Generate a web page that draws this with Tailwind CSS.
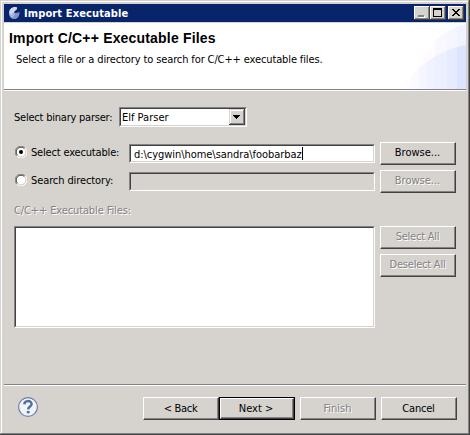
<!DOCTYPE html>
<html lang="en">
<head>
<meta charset="utf-8">
<title>Import Executable</title>
<script src="https://cdn.jsdelivr.net/npm/@tailwindcss/browser@4"></script>
</head>
<body class="h-[435px] w-[470px] overflow-hidden bg-[#d6d3ce]">
<main class="flex h-[435px] w-[470px] flex-col border-r border-b border-[#424142] font-['DejaVu_Sans_Condensed','Noto_Sans',sans-serif] text-[11px] leading-[13px] whitespace-nowrap text-black">
<div class="flex grow flex-col border-t border-r border-b border-l border-t-[#d6d3ce] border-r-[#848284] border-b-[#848284] border-l-[#d6d3ce]">
<div class="flex grow flex-col border-t border-l border-white pt-[2px] pr-[2px] pl-[2px]">

  <header class="flex h-[18px] shrink-0 items-center bg-[#08246b] pr-[2px] pl-[4px] text-white">
    <svg class="h-[14px] w-[12px]" viewBox="0 0 12 14"><path d="M8.500 1C4 .6 1 3 1 7c0 3.500 2.300 5.800 5.200 5.800 3 0 5-2.300 5.200-6.300L6.800 7.300 6 5.800 9 3z" fill="#a5b6d8"/><path d="M8.500 1C4 .6 1.500 3 1.500 6.500L3 9l3-3.200L9 3z" fill="#cdd8ee"/><path d="M6.800 7.300l4.600-.8c-.2 4-2.200 6.300-5.200 6.300-1.200 0-2.200-.4-3-1 2 0 3.600-1.500 3.600-4.500z" fill="#8296c2"/></svg>
    <h1 class="ml-[4px] grow text-[11px] font-bold tracking-[0.12px]">Import Executable</h1>
    <div class="flex">
      <svg class="h-[14px] w-[16px]" viewBox="0 0 16 14" shape-rendering="crispEdges"><path d="M0 0h16v14H0z" fill="#424142"/><path d="M0 0h15v13H0z" fill="#fff"/><path d="M1 1h14v12H1z" fill="#848284"/><path d="M1 1h13v11H1z" fill="#d6d3ce"/><path d="M5 10h6v2H5z" fill="#fff"/><path d="M4 9h6v2H4z" fill="#848284"/></svg>
      <svg class="h-[14px] w-[16px]" viewBox="0 0 16 14" shape-rendering="crispEdges"><path d="M0 0h16v14H0z" fill="#424142"/><path d="M0 0h15v13H0z" fill="#fff"/><path d="M1 1h14v12H1z" fill="#848284"/><path d="M1 1h13v11H1z" fill="#d6d3ce"/><path d="M3 2h9v9H3zM4 4v6h7V4z" fill="#000" fill-rule="evenodd"/></svg>
      <svg class="ml-[2px] h-[14px] w-[16px]" viewBox="0 0 16 14" shape-rendering="crispEdges"><path d="M0 0h16v14H0z" fill="#424142"/><path d="M0 0h15v13H0z" fill="#fff"/><path d="M1 1h14v12H1z" fill="#848284"/><path d="M1 1h13v11H1z" fill="#d6d3ce"/><path d="M4 3h2v1h1v1h2V4h1V3h2v1h-1v1h-1v1H9v1h1v1h1v1h1v1h-2V9H9V8H7v1H6v1H4V9h1V8h1V7h1V6H6V5H5V4H4z" fill="#000"/></svg>
    </div>
  </header>

  <section class="mt-px flex h-[68px] shrink-0 justify-between border-b border-white bg-white">
    <div class="flex h-[67px] w-full justify-between border-b border-[#848284]">
      <div class="pt-[8px] pl-[5px]">
        <h2 class="font-['Liberation_Sans'] text-[14px] leading-[15px] font-bold tracking-[0.18px]">Import C/C++ Executable Files</h2>
        <p class="mt-[7px] pl-[7px] tracking-[-0.12px]">Select a file or a directory to search for C/C++ executable files.</p>
      </div>
      <svg class="h-[66px] w-[66px] shrink-0" viewBox="0 0 66 66">
        <defs>
          <clipPath id="outer"><path d="M66 1C40 6 18 30 10 66h56z"/></clipPath>
          <clipPath id="inner"><path d="M66 22C40 26 14 44 3 66h63z"/></clipPath>
        </defs>
        <g clip-path="url(#outer)"><path d="M3 0h32v66H3z" fill="#fffbff"/><path d="M35 0h12v66H35z" fill="#f9f8ff"/><path d="M47 0h10v66H47z" fill="#f5f6ff"/><path d="M57 0h9v66h-9z" fill="#eff2ff"/></g>
        <g clip-path="url(#inner)"><path d="M3 0h9v66H3z" fill="#fffbff"/><path d="M12 0h7v66h-7z" fill="#faf9ff"/><path d="M19 0h8v66h-8z" fill="#f5f5ff"/><path d="M27 0h8v66h-8z" fill="#f1f2ff"/><path d="M35 0h12v66H35z" fill="#edf0ff"/><path d="M47 0h10v66H47z" fill="#e6ebff"/><path d="M57 0h9v66h-9z" fill="#dce5ff"/></g>
      </svg>
    </div>
  </section>

  <section class="flex h-[293px] shrink-0 flex-col pt-[16px] pl-[10px]">
    <div class="flex h-[20px]">
      <span class="w-[105px] pt-[4px] tracking-[-0.22px]">Select binary parser:</span>
      <div class="flex h-[20px] w-[128px] border border-t-[#848284] border-r-white border-b-white border-l-[#848284]">
        <div class="flex grow border border-t-[#424142] border-r-[#d6d3ce] border-b-[#d6d3ce] border-l-[#424142] bg-white pl-px">
          <span class="grow pt-[2px]">Elf Parser</span>
          <svg class="h-[16px] w-[16px]" viewBox="0 0 16 16" shape-rendering="crispEdges"><path d="M0 0h16v16H0z" fill="#424142"/><path d="M0 0h15v15H0z" fill="#d6d3ce"/><path d="M1 1h14v14H1z" fill="#848284"/><path d="M1 1h13v13H1z" fill="#fff"/><path d="M2 2h12v12H2z" fill="#d6d3ce"/><path d="M4 6h7v1h-1v1H9v1H8v1H7V9H6V8H5V7H4z"/></svg>
        </div>
      </div>
    </div>

    <div class="mt-[15px] flex h-[23px]">
      <svg class="mt-[4px] ml-px h-[12px] w-[12px]" viewBox="0 0 12 12"><circle cx="6" cy="6" r="5" fill="#fff"/><path d="M1.8 10.2A5.5 5.5 0 0 1 10.2 1.8" fill="none" stroke="#848284"/><path d="M2.6 9.4A4.6 4.6 0 0 1 9.4 2.6" fill="none" stroke="#424142"/><path d="M10.2 1.8A5.5 5.5 0 0 1 1.8 10.2" fill="none" stroke="#fff"/><path d="M9.4 2.6A4.6 4.6 0 0 1 2.6 9.4" fill="none" stroke="#d6d3ce"/><circle cx="6" cy="6" r="2"/></svg>
      <span class="ml-[4px] w-[98px] pt-[4px] tracking-[-0.17px]">Select executable:</span>
      <div class="mt-[2px] h-[19px] w-[246px] border border-t-[#848284] border-r-white border-b-white border-l-[#848284]">
        <div class="flex h-[17px] border border-t-[#424142] border-r-[#d6d3ce] border-b-[#d6d3ce] border-l-[#424142] bg-white pl-[3px]"><span class="pt-[2px] tracking-[-0.05px]">d:\cygwin\home\sandra\foobarbaz</span><i class="mt-px h-[13px] w-px bg-black"></i></div>
      </div>
      <div class="ml-[5px] h-[23px] w-[76px] border border-t-white border-r-[#424142] border-b-[#424142] border-l-white"><div class="h-[21px] border-r border-b border-[#848284] pt-[3px] text-center">Browse...</div></div>
    </div>

    <div class="mt-[5px] flex h-[23px]">
      <svg class="mt-[4px] ml-px h-[12px] w-[12px]" viewBox="0 0 12 12"><circle cx="6" cy="6" r="5" fill="#fff"/><path d="M1.8 10.2A5.5 5.5 0 0 1 10.2 1.8" fill="none" stroke="#848284"/><path d="M2.6 9.4A4.6 4.6 0 0 1 9.4 2.6" fill="none" stroke="#424142"/><path d="M10.2 1.8A5.5 5.5 0 0 1 1.8 10.2" fill="none" stroke="#fff"/><path d="M9.4 2.6A4.6 4.6 0 0 1 2.6 9.4" fill="none" stroke="#d6d3ce"/></svg>
      <span class="ml-[4px] w-[98px] pt-[4px] tracking-[-0.1px]">Search directory:</span>
      <div class="mt-[2px] h-[19px] w-[246px] border border-t-[#848284] border-r-white border-b-white border-l-[#848284]">
        <div class="h-[17px] border border-t-[#424142] border-r-[#d6d3ce] border-b-[#d6d3ce] border-l-[#424142]"></div>
      </div>
      <div class="ml-[5px] h-[23px] w-[76px] border border-t-white border-r-[#424142] border-b-[#424142] border-l-white"><div class="h-[21px] border-r border-b border-[#848284] pt-[3px] text-center text-[#848284] [text-shadow:1px_1px_0_#fff]">Browse...</div></div>
    </div>

    <div class="mt-[11px] h-[22px] tracking-[-0.12px] text-[#848284] [text-shadow:1px_1px_0_#fff]">C/C++ Executable Files:</div>

    <div class="flex gap-[5px]">
      <div class="h-[102px] w-[361px] border border-t-[#848284] border-r-white border-b-white border-l-[#848284]">
        <div class="h-[100px] border border-t-[#424142] border-r-[#d6d3ce] border-b-[#d6d3ce] border-l-[#424142] bg-white"></div>
      </div>
      <div class="flex flex-col gap-[5px] tracking-[-0.22px] text-[#848284] [text-shadow:1px_1px_0_#fff]">
        <div class="h-[23px] w-[76px] border border-t-white border-r-[#424142] border-b-[#424142] border-l-white"><div class="h-[21px] border-r border-b border-[#848284] pt-[3px] text-center">Select All</div></div>
        <div class="h-[23px] w-[76px] border border-t-white border-r-[#424142] border-b-[#424142] border-l-white"><div class="h-[21px] border-r border-b border-[#848284] pt-[3px] text-center">Deselect All</div></div>
      </div>
    </div>
  </section>

  <footer class="border-t border-[#848284]">
    <div class="flex border-t border-white pt-[11px] pl-[14px]">
      <svg class="h-[20px] w-[20px]" viewBox="0 0 20 20"><circle cx="10" cy="10" r="9.4" fill="#f1f3f8" stroke="#6b7fa8" stroke-width="1.2"/><path d="M6.3 7.4C6.4 3 13.8 3 13.6 7.2c-.1 2.3-3.4 2.3-3.4 5.2" fill="none" stroke="#526d9c" stroke-width="2.4"/><path d="M8.8 14h2.8v2.3H8.8z" fill="#526d9c"/></svg>
      <div class="ml-[105px] h-[23px] w-[76px] border border-t-white border-r-[#424142] border-b-[#424142] border-l-white"><div class="h-[21px] border-r border-b border-[#848284] pt-[4px] text-center tracking-[-0.3px]">&lt; Back</div></div>
      <div class="h-[23px] w-[76px] border border-black"><div class="h-[21px] border border-t-white border-r-[#424142] border-b-[#424142] border-l-white"><div class="h-[19px] border-r border-b border-[#848284] pt-[3px] pr-px text-center">Next &gt;</div></div></div>
      <div class="ml-[5px] h-[23px] w-[76px] border border-t-white border-r-[#424142] border-b-[#424142] border-l-white"><div class="h-[21px] border-r border-b border-[#848284] pt-[4px] text-center text-[#848284] [text-shadow:1px_1px_0_#fff]">Finish</div></div>
      <div class="ml-[5px] h-[23px] w-[76px] border border-t-white border-r-[#424142] border-b-[#424142] border-l-white"><div class="h-[21px] border-r border-b border-[#848284] pt-[4px] text-center tracking-[-0.2px]">Cancel</div></div>
    </div>
  </footer>
</div>
</div>
</main>
</body>
</html>
